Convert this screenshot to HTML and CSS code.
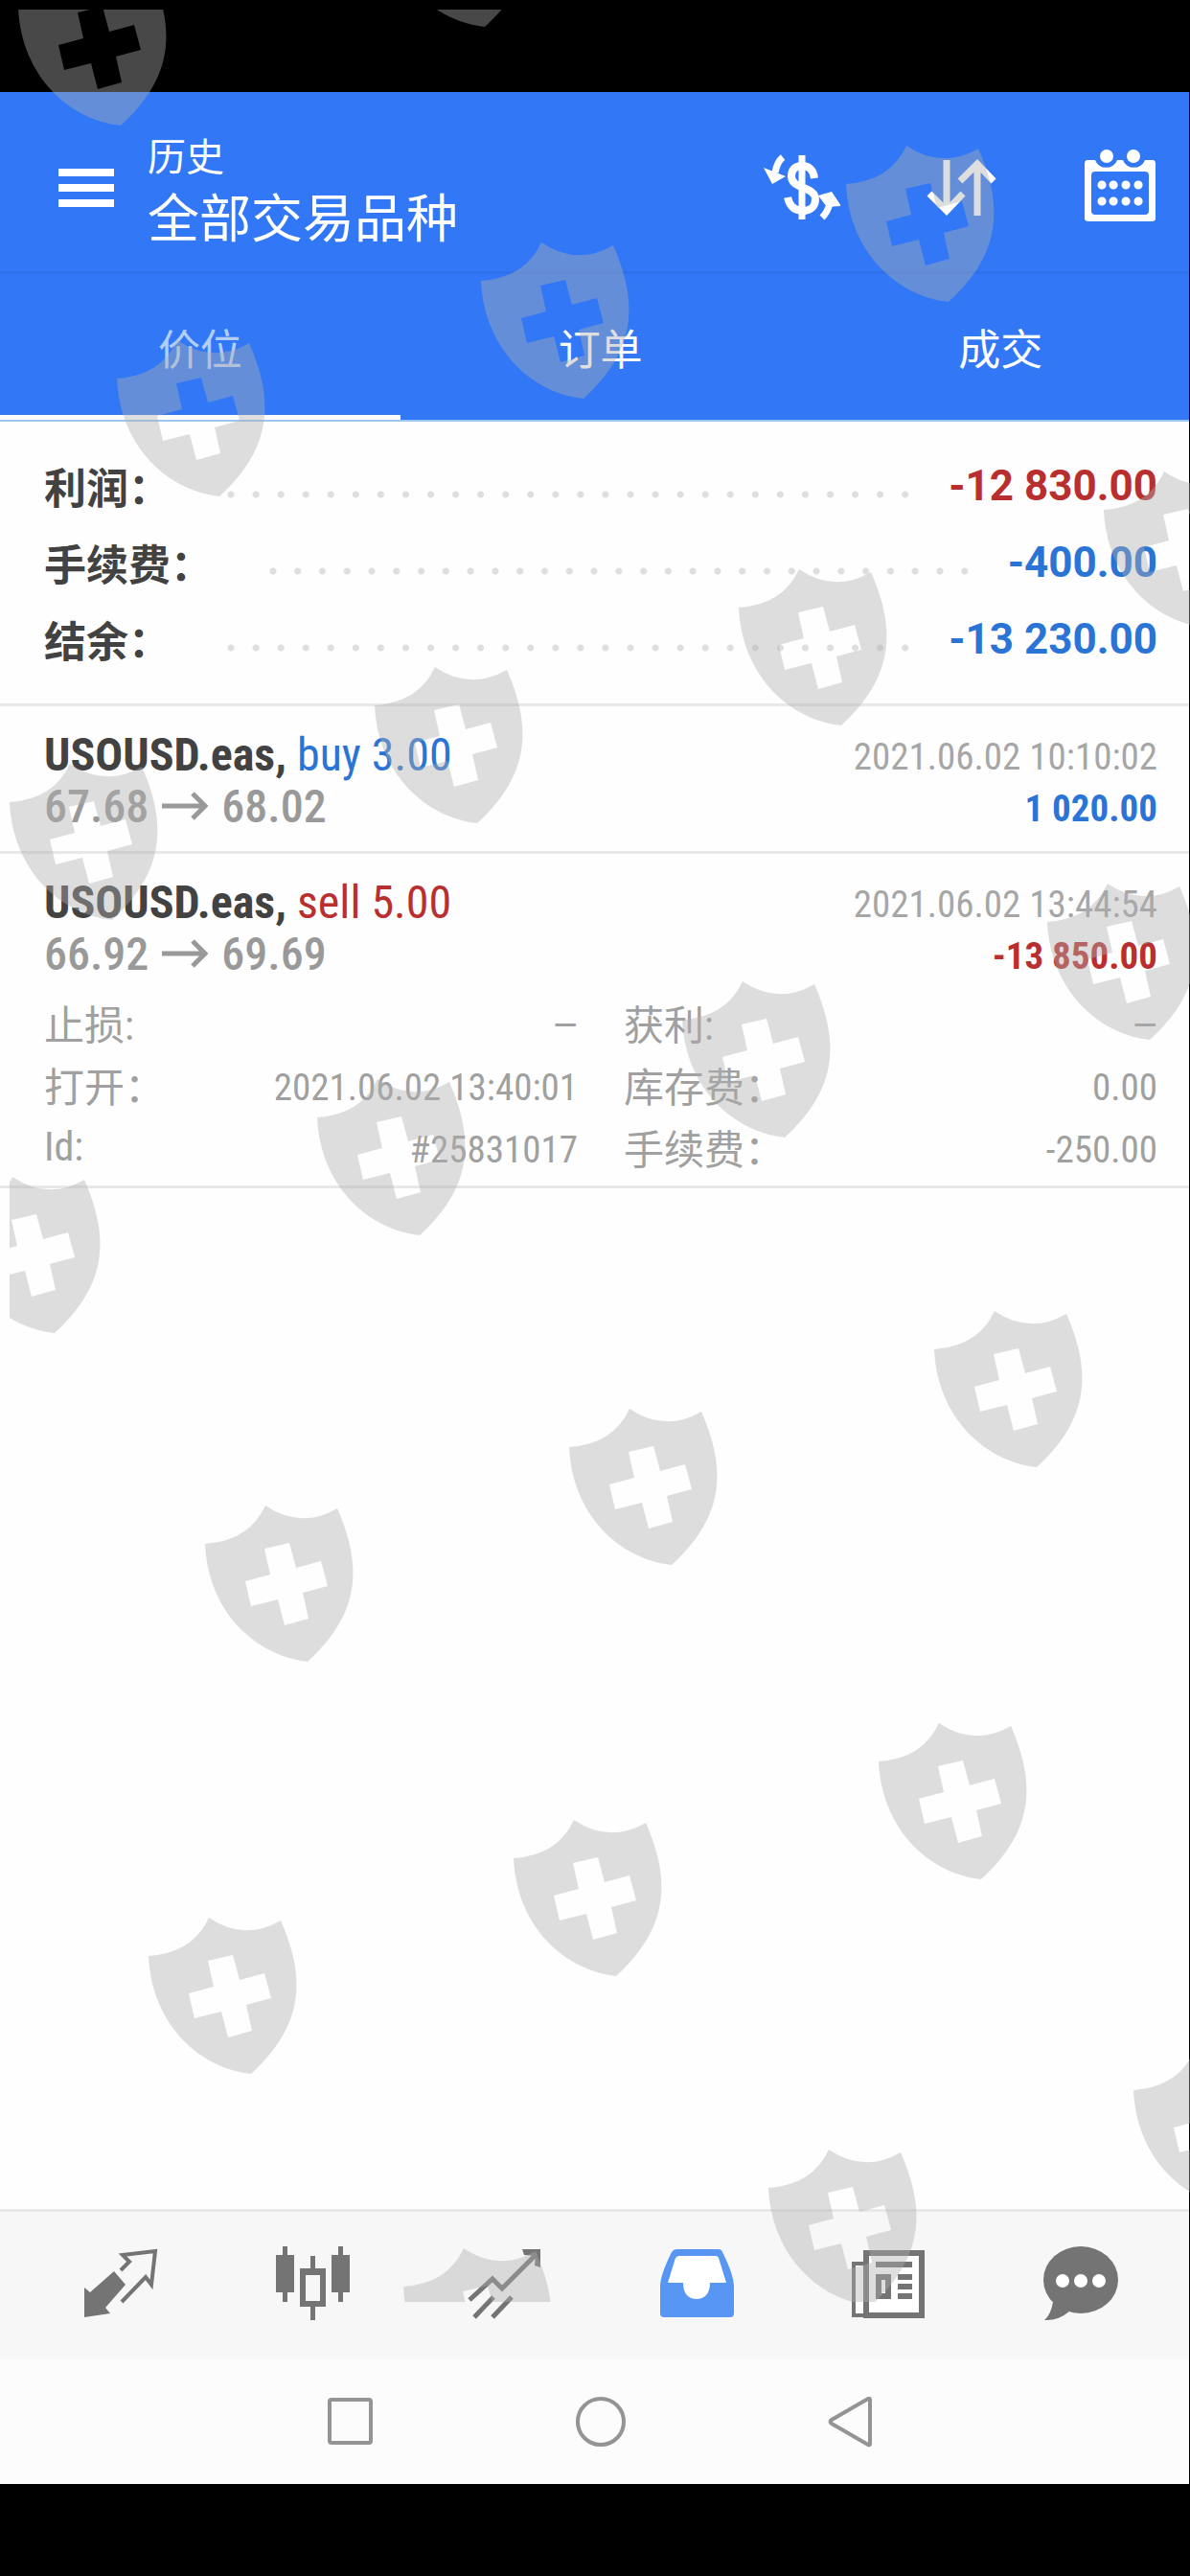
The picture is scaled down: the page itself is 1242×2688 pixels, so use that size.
FILE: index.html
```html
<!DOCTYPE html>
<html lang="zh-CN">
<head>
<meta charset="utf-8">
<meta name="viewport" content="width=device-width, initial-scale=1">
<title>历史</title>
<link rel="stylesheet" href="styles.css">
</head>
<body>
<div class="screen">
  <header class="topbar">
    <button class="icon-button" type="button" aria-label="菜单">
      <svg width="60" height="42" viewBox="0 0 60 42"><path d="M1 5h58M1 21h58M1 37h58" stroke="#fff" stroke-width="8"/></svg>
    </button>
    <div class="heading">
      <p class="heading-section">历史</p>
      <h1 class="heading-title">全部交易品种</h1>
    </div>
    <div class="actions">
      <button class="icon-button" type="button" aria-label="货币">
        <svg width="80" height="80" viewBox="0 0 80 80" fill="none" stroke="#fff">
          <path d="M40 6V73" stroke-width="7"/>
          <path d="M53 30C52 21 47 17 40 17C32 17 29 22 29 28C29 42 54 38 54 52C54 60 48 64 41 64C32 64 27 59 25 50" stroke-width="8"/>
          <path d="M20 8Q14 13 12 24M61 71Q67 65 69 56" stroke-width="7"/>
          <path d="M0 19L9 36L23 28ZM57 48L71 44L81 59L66 60Z" fill="#fff" stroke="none"/>
        </svg>
      </button>
      <button class="icon-button" type="button" aria-label="排序">
        <svg width="80" height="80" viewBox="0 0 80 80" fill="none" stroke="#fff" stroke-width="7">
          <path d="M25 11V64M7 46L25 64L42 46M57 69V15M39 33L57 15L74 33"/>
        </svg>
      </button>
      <button class="icon-button" type="button" aria-label="日期">
        <svg width="80" height="80" viewBox="0 0 80 80" fill="#fff">
          <path fill-rule="evenodd" d="M6 11H14A12 11 0 0 0 37 11H43A12 11 0 0 0 66 11H74Q77 11 77 15V72Q77 75 73 75H7Q3 75 3 72V15Q3 11 6 11ZM14 23Q10 23 10 27V64Q10 68 14 68H66Q70 68 70 64V27Q70 23 66 23Z"/>
          <circle cx="26" cy="7" r="7"/><circle cx="54" cy="7" r="7"/>
          <path d="M21 37h.1M33 37h.1M46 37h.1M59 37h.1M21 54h.1M33 54h.1M46 54h.1M59 54h.1" stroke="#fff" stroke-width="9" stroke-linecap="round"/>
        </svg>
      </button>
    </div>
  </header>

  <nav class="tabs">
    <button class="tab tab-active" type="button">价位</button>
    <button class="tab" type="button">订单</button>
    <button class="tab" type="button">成交</button>
  </nav>

  <main class="content">
    <dl class="summary">
      <div class="summary-row"><dt>利润：</dt><dd class="negative">-12 830.00</dd></div>
      <div class="summary-row"><dt>手续费：</dt><dd class="positive">-400.00</dd></div>
      <div class="summary-row"><dt>结余：</dt><dd class="positive">-13 230.00</dd></div>
    </dl>

    <article class="trade">
      <div class="trade-line">
        <h2 class="symbol">USOUSD.eas, <span class="side positive">buy 3.00</span></h2>
        <time class="time">2021.06.02 10:10:02</time>
      </div>
      <div class="trade-line">
        <p class="prices">67.68 <svg class="arrow" width="48" height="30" viewBox="0 0 48 30"><path d="M0 15H45M32 2L45 15L32 28"/></svg> 68.02</p>
        <p class="profit positive">1 020.00</p>
      </div>
    </article>

    <article class="trade trade-open">
      <div class="trade-line">
        <h2 class="symbol">USOUSD.eas, <span class="side negative">sell 5.00</span></h2>
        <time class="time">2021.06.02 13:44:54</time>
      </div>
      <div class="trade-line">
        <p class="prices">66.92 <svg class="arrow" width="48" height="30" viewBox="0 0 48 30"><path d="M0 15H45M32 2L45 15L32 28"/></svg> 69.69</p>
        <p class="profit negative">-13 850.00</p>
      </div>
      <dl class="details">
        <div class="detail"><dt>止损:</dt><dd>—</dd></div>
        <div class="detail"><dt>获利:</dt><dd>—</dd></div>
        <div class="detail"><dt>打开：</dt><dd>2021.06.02 13:40:01</dd></div>
        <div class="detail"><dt>库存费：</dt><dd>0.00</dd></div>
        <div class="detail"><dt>Id:</dt><dd>#25831017</dd></div>
        <div class="detail"><dt>手续费：</dt><dd>-250.00</dd></div>
      </dl>
    </article>
  </main>

  <nav class="bottom-nav">
    <a href="#quotes" aria-label="行情">
      <svg width="80" height="80" viewBox="0 0 80 80" fill="none" stroke="#747474" stroke-width="4">
        <path d="M34 28L46 42L25 66L30 72L3 76V45L9 50Z" fill="#747474" stroke="none"/>
        <path d="M41 27L50 18L43 11L77 7L73 42L67 34L42 60"/>
      </svg>
    </a>
    <a href="#charts" aria-label="图表">
      <svg width="80" height="80" viewBox="0 0 80 80" fill="#747474">
        <path d="M9 2h5v9h7v39h-7v10h-5v-10h-7v-39h7zM67 2h5v9h7v39h-7v10h-5v-10h-7v-39h7z"/>
        <path fill-rule="evenodd" d="M38 12h5v13h11v40h-11v14h-5v-14h-11v-40h11zM33 32v27h15v-27z"/>
      </svg>
    </a>
    <a href="#trade" aria-label="交易">
      <svg width="80" height="80" viewBox="0 0 80 80" fill="none" stroke="#747474" stroke-width="5">
        <path d="M4 58L28 36L38 46L74 10M29 55L9 76M48 55L28 76"/>
        <path d="M59 5H78V24L72 22L73 12L61 11Z" fill="#747474" stroke="none"/>
      </svg>
    </a>
    <a href="#history" aria-label="历史" aria-current="page">
      <svg width="80" height="80" viewBox="0 0 80 80">
        <path d="M19 5H63Q66 5 67 8Q79 32 79 44V72Q79 76 75 76H6Q2 76 2 72V44Q2 32 14 8Q16 5 19 5Z" fill="#5797f3"/>
        <path d="M22 12H60Q62 12 63 14L71 40H54C54 52 48 57 40 57C32 57 26 52 26 40H10L18 14Q20 12 22 12Z" fill="#fff"/>
      </svg>
    </a>
    <a href="#news" aria-label="新闻">
      <svg width="80" height="80" viewBox="0 0 80 80" fill="none" stroke="#747474">
        <path d="M14 20H4V74H14" fill="#fff" stroke-width="4"/>
        <path d="M17 9H75V74H17Z" fill="#fff" stroke-width="6"/>
        <path d="M27 21H65M50 34H65M50 44H65M50 54H65" stroke-width="6"/>
        <path d="M30 34H40V54H30Z" stroke-width="6"/>
      </svg>
    </a>
    <a href="#messages" aria-label="消息">
      <svg width="80" height="80" viewBox="0 0 80 80">
        <path d="M11 60Q9 73 2 79Q16 80 28 70Z" fill="#747474"/>
        <ellipse cx="40" cy="37" rx="39" ry="35" fill="#747474"/>
        <circle cx="21" cy="38" r="7" fill="#fff"/><circle cx="40" cy="38" r="7" fill="#fff"/><circle cx="59" cy="38" r="7" fill="#fff"/>
      </svg>
    </a>
  </nav>

  <div class="system-nav">
    <button class="icon-button" type="button" aria-label="最近任务">
      <svg width="54" height="54" viewBox="0 0 54 54"><rect x="6" y="4" width="43" height="45" rx="2"/></svg>
    </button>
    <button class="icon-button" type="button" aria-label="主屏幕">
      <svg width="54" height="54" viewBox="0 0 54 54"><circle cx="27" cy="27" r="24"/></svg>
    </button>
    <button class="icon-button" type="button" aria-label="返回">
      <svg width="54" height="54" viewBox="0 0 54 54"><path d="M46 4V50Q46 52 44 51L6 29Q3 27 6 25L44 3Q46 2 46 4Z"/></svg>
    </button>
  </div>

  <svg class="watermark" viewBox="10 10 1232 2392" preserveAspectRatio="xMinYMin slice" aria-hidden="true">
    <defs>
      <path id="shield" fill-rule="evenodd" d="M0 40Q46 37 63 0Q100 25 138 3C164 62 163 112 107 163C52 157 3 110 0 40ZM62 45L68 72L42 79L48 105L76 98L83 125L108 118L102 91L128 84L121 58L95 65L88 39Z"/>
    </defs>
    <use href="#shield" x="19" y="-32"/><use href="#shield" x="399" y="-135"/>
    <use href="#shield" x="883" y="152"/><use href="#shield" x="502" y="253"/><use href="#shield" x="122" y="355"/>
    <use href="#shield" x="1152" y="492"/><use href="#shield" x="771" y="594"/><use href="#shield" x="391" y="696"/><use href="#shield" x="10" y="797"/>
    <use href="#shield" x="1093" y="922"/><use href="#shield" x="712" y="1024"/><use href="#shield" x="331" y="1126"/><use href="#shield" x="-50" y="1228"/>
    <use href="#shield" x="975" y="1368"/><use href="#shield" x="594" y="1470"/><use href="#shield" x="214" y="1571"/>
    <use href="#shield" x="917" y="1798"/><use href="#shield" x="536" y="1899"/><use href="#shield" x="155" y="2001"/>
    <use href="#shield" x="1183" y="2141"/><use href="#shield" x="802" y="2243"/><use href="#shield" x="421" y="2346"/>
  </svg>
</div>
</body>
</html>
```
FILE: styles.css
```css
* {
  box-sizing: border-box;
}

body,
h1,
h2,
p,
dl,
dd {
  margin: 0;
}

body {
  background: #000;
  color: #424242;
  font-family: Roboto, "Noto Sans CJK SC", sans-serif;
}

svg {
  display: block;
}

button {
  padding: 0;
  border: 0;
  background: none;
  color: inherit;
  font: inherit;
}

.screen {
  position: relative;
  display: flex;
  flex-direction: column;
  min-height: 100vh;
  padding: 96px 1px 96px 0;
}

.topbar {
  display: flex;
  align-items: center;
  height: 190px;
  padding: 12px 32px 0 60px;
  border-bottom: 3px solid #2f71ea;
  background: #3278f6;
  color: #fff;
}

.heading {
  flex: 1;
  padding: 12px 0 0 34px;
}

.heading-section {
  font-size: 40px;
  line-height: 56px;
}

.heading-title {
  font-size: 54px;
  font-weight: 400;
  line-height: 74px;
}

.actions {
  display: flex;
  gap: 86px;
}

.tabs {
  display: grid;
  grid-template-columns: 34fr 34fr 33fr;
  height: 154px;
  border-bottom: 2px solid #9cc6ee;
  background: #3278f6;
}

.tab {
  padding-top: 4px;
  border-bottom: 5px solid transparent;
  color: #fff;
  font-size: 44px;
}

.tab:last-child {
  padding-left: 12px;
}

.tab-active {
  border-bottom-color: #fff;
  color: #b4cdf5;
}

.content {
  flex: 1;
  background: #fefefe;
}

.positive {
  color: #2a74d6;
}

.negative {
  color: #b92f2f;
}

.summary {
  padding: 27px 33px 27px 46px;
  border-bottom: 3px solid #e8e8e8;
  font-weight: 700;
}

.summary-row {
  display: flex;
  align-items: center;
  height: 80px;
  font-size: 44px;
}

/* Dotted leader between a label and its amount */
.summary-row::before {
  content: "";
  order: 1;
  flex: 1;
  height: 8px;
  margin: 18px 32px 0 50px;
  background: radial-gradient(circle, #dedede 3px, transparent 4px) 0 0 / 26px 8px round;
}

.summary-row dd {
  order: 2;
}

.trade {
  padding: 23px 33px 20px 46px;
  border-bottom: 3px solid #e8e8e8;
  font-family: "Roboto Condensed", "Liberation Sans Narrow", Roboto, "Noto Sans CJK SC", sans-serif;
}

.trade-open {
  padding-bottom: 5px;
}

.trade-line {
  display: flex;
  align-items: center;
  justify-content: space-between;
  height: 54px;
}

.symbol {
  font-size: 48px;
  font-weight: 700;
}

.side {
  font-weight: 400;
}

.time {
  padding-top: 6px;
  color: #a6a6a6;
  font-size: 39px;
}

.prices {
  display: flex;
  align-items: center;
  gap: 14px;
  color: #999;
  font-size: 48px;
  font-weight: 500;
}

.arrow {
  fill: none;
  stroke: #999;
  stroke-width: 5;
}

.profit {
  padding-top: 6px;
  font-size: 39px;
  font-weight: 700;
}

.details {
  display: grid;
  grid-template-columns: 1fr 1fr;
  column-gap: 48px;
  margin-top: 15px;
  color: #a0a0a0;
  font-size: 39px;
}

.detail {
  display: flex;
  align-items: center;
  justify-content: space-between;
  height: 65px;
}

.detail dt {
  padding-bottom: 6px;
  font-size: 42px;
}

.bottom-nav {
  display: grid;
  grid-template-columns: repeat(6, 1fr);
  align-items: center;
  justify-items: center;
  height: 157px;
  padding: 0 13px 6px 25px;
  border-top: 3px solid #e8e8e8;
  background: #f7f7f7;
}

.system-nav {
  display: flex;
  align-items: center;
  justify-content: center;
  gap: 208px;
  height: 130px;
  padding-left: 12px;
  background: #fcfcfc;
}

.system-nav svg {
  fill: none;
  stroke: #949494;
  stroke-width: 4;
}

.watermark {
  position: absolute;
  top: 10px;
  left: 10px;
  width: calc(100% - 10px);
  height: calc(100% - 296px);
  overflow: hidden;
  fill: #b0b0b0;
  fill-opacity: 0.41;
  pointer-events: none;
}
```
